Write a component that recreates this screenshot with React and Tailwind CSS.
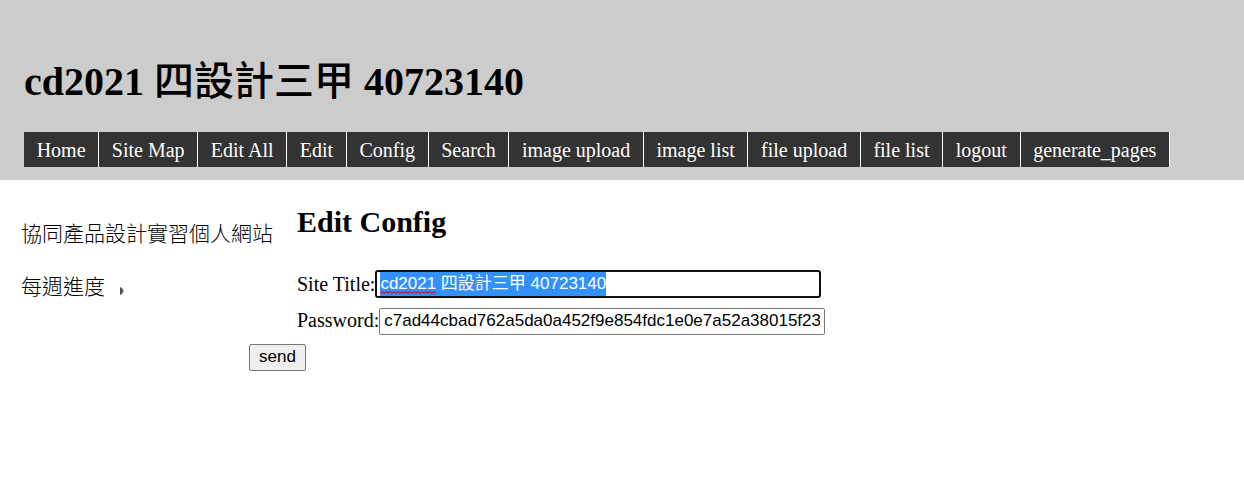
import { useEffect, useRef } from "react";

const NAV = [
  "Home",
  "Site Map",
  "Edit All",
  "Edit",
  "Config",
  "Search",
  "image upload",
  "image list",
  "file upload",
  "file list",
  "logout",
  "generate_pages",
];

function Header() {
  return (
    <header className="bg-[#cccccc] px-6 pt-[58px] pb-[13px]">
      <h1 className="text-[40px] leading-[48px] font-bold">
        cd2021 <span className="font-medium">四設計三甲</span> 40723140
      </h1>
      <nav className="mt-[26px]">
        <ul className="flex max-w-[1146px] flex-wrap">
          {NAV.map((item) => (
            <li key={item} className="grow border-r border-white bg-[#333333] text-center">
              <a href="#" className="block h-[35px] px-3 text-xl leading-[36px] text-white">
                {item}
              </a>
            </li>
          ))}
        </ul>
      </nav>
    </header>
  );
}

function Sidebar() {
  return (
    <aside className="w-[297px] shrink-0 pt-9 pl-[21px]">
      <ul className="flex flex-col gap-[17px] text-[21px] leading-9 font-light">
        <li>
          <a href="#">協同產品設計實習個人網站</a>
        </li>
        <li>
          <a href="#" className="flex items-center gap-[15px]">
            每週進度
            <svg className="mt-2 h-2 w-1" viewBox="0 0 4 8" aria-hidden="true">
              <path d="M0 0C2 1 3.5 2.5 3.5 4S2 7 0 8Z" fill="#555555" />
            </svg>
          </a>
        </li>
      </ul>
    </aside>
  );
}

function ConfigForm() {
  const titleRef = useRef(null);

  useEffect(() => {
    titleRef.current.focus();
    titleRef.current.select();
  }, []);

  return (
    <main className="min-w-0 grow pt-6">
      <h2 className="text-[30px] leading-9 font-bold">Edit Config</h2>
      <form className="mt-[30px] text-xl leading-7" onSubmit={(e) => e.preventDefault()}>
        <div className="flex">
          <label htmlFor="site-title" className="shrink-0">
            Site Title:
          </label>
          <div className="relative w-full max-w-[446px]">
            <input
              ref={titleRef}
              id="site-title"
              type="text"
              spellCheck={false}
              defaultValue="cd2021 四設計三甲 40723140"
              className="block h-7 w-full rounded-[3px] border-2 border-[#101010] bg-white px-[3px] font-['Liberation_Sans','Noto_Sans_CJK_TC',sans-serif] text-[17px] outline-none selection:bg-[#3390ff] selection:text-white"
            />
            <svg
              className="pointer-events-none absolute bottom-1 left-[5px] h-[3px] w-14"
              aria-hidden="true"
            >
              <defs>
                <pattern id="squiggle" width="4" height="3" patternUnits="userSpaceOnUse">
                  <path d="M0 2.5L2 .5L4 2.5" fill="none" stroke="#c0203f" strokeWidth="1.3" />
                </pattern>
              </defs>
              <rect width="56" height="3" fill="url(#squiggle)" />
            </svg>
          </div>
        </div>
        <div className="mt-[10px] flex">
          <label htmlFor="password" className="-mt-[2px] shrink-0">
            Password:
          </label>
          <input
            id="password"
            type="text"
            spellCheck={false}
            defaultValue="c7ad44cbad762a5da0a452f9e854fdc1e0e7a52a38015f23f3"
            className="block h-[27px] w-full max-w-[446px] rounded-[2px] border border-[#767676] bg-white px-1 pb-px font-['Liberation_Sans',sans-serif] text-[17px] outline-none"
          />
        </div>
        <button
          type="submit"
          className="mt-[9px] -ml-12 block h-[27px] rounded-[2px] border border-[#767676] bg-[#efefef] px-[9px] pb-px font-['Liberation_Sans',sans-serif] text-[17px] leading-6"
        >
          send
        </button>
      </form>
    </main>
  );
}

export default function App() {
  return (
    <div className="min-h-screen bg-white font-['Liberation_Serif','Noto_Sans_CJK_TC',serif] text-black">
      <Header />
      <div className="flex">
        <Sidebar />
        <ConfigForm />
      </div>
    </div>
  );
}
